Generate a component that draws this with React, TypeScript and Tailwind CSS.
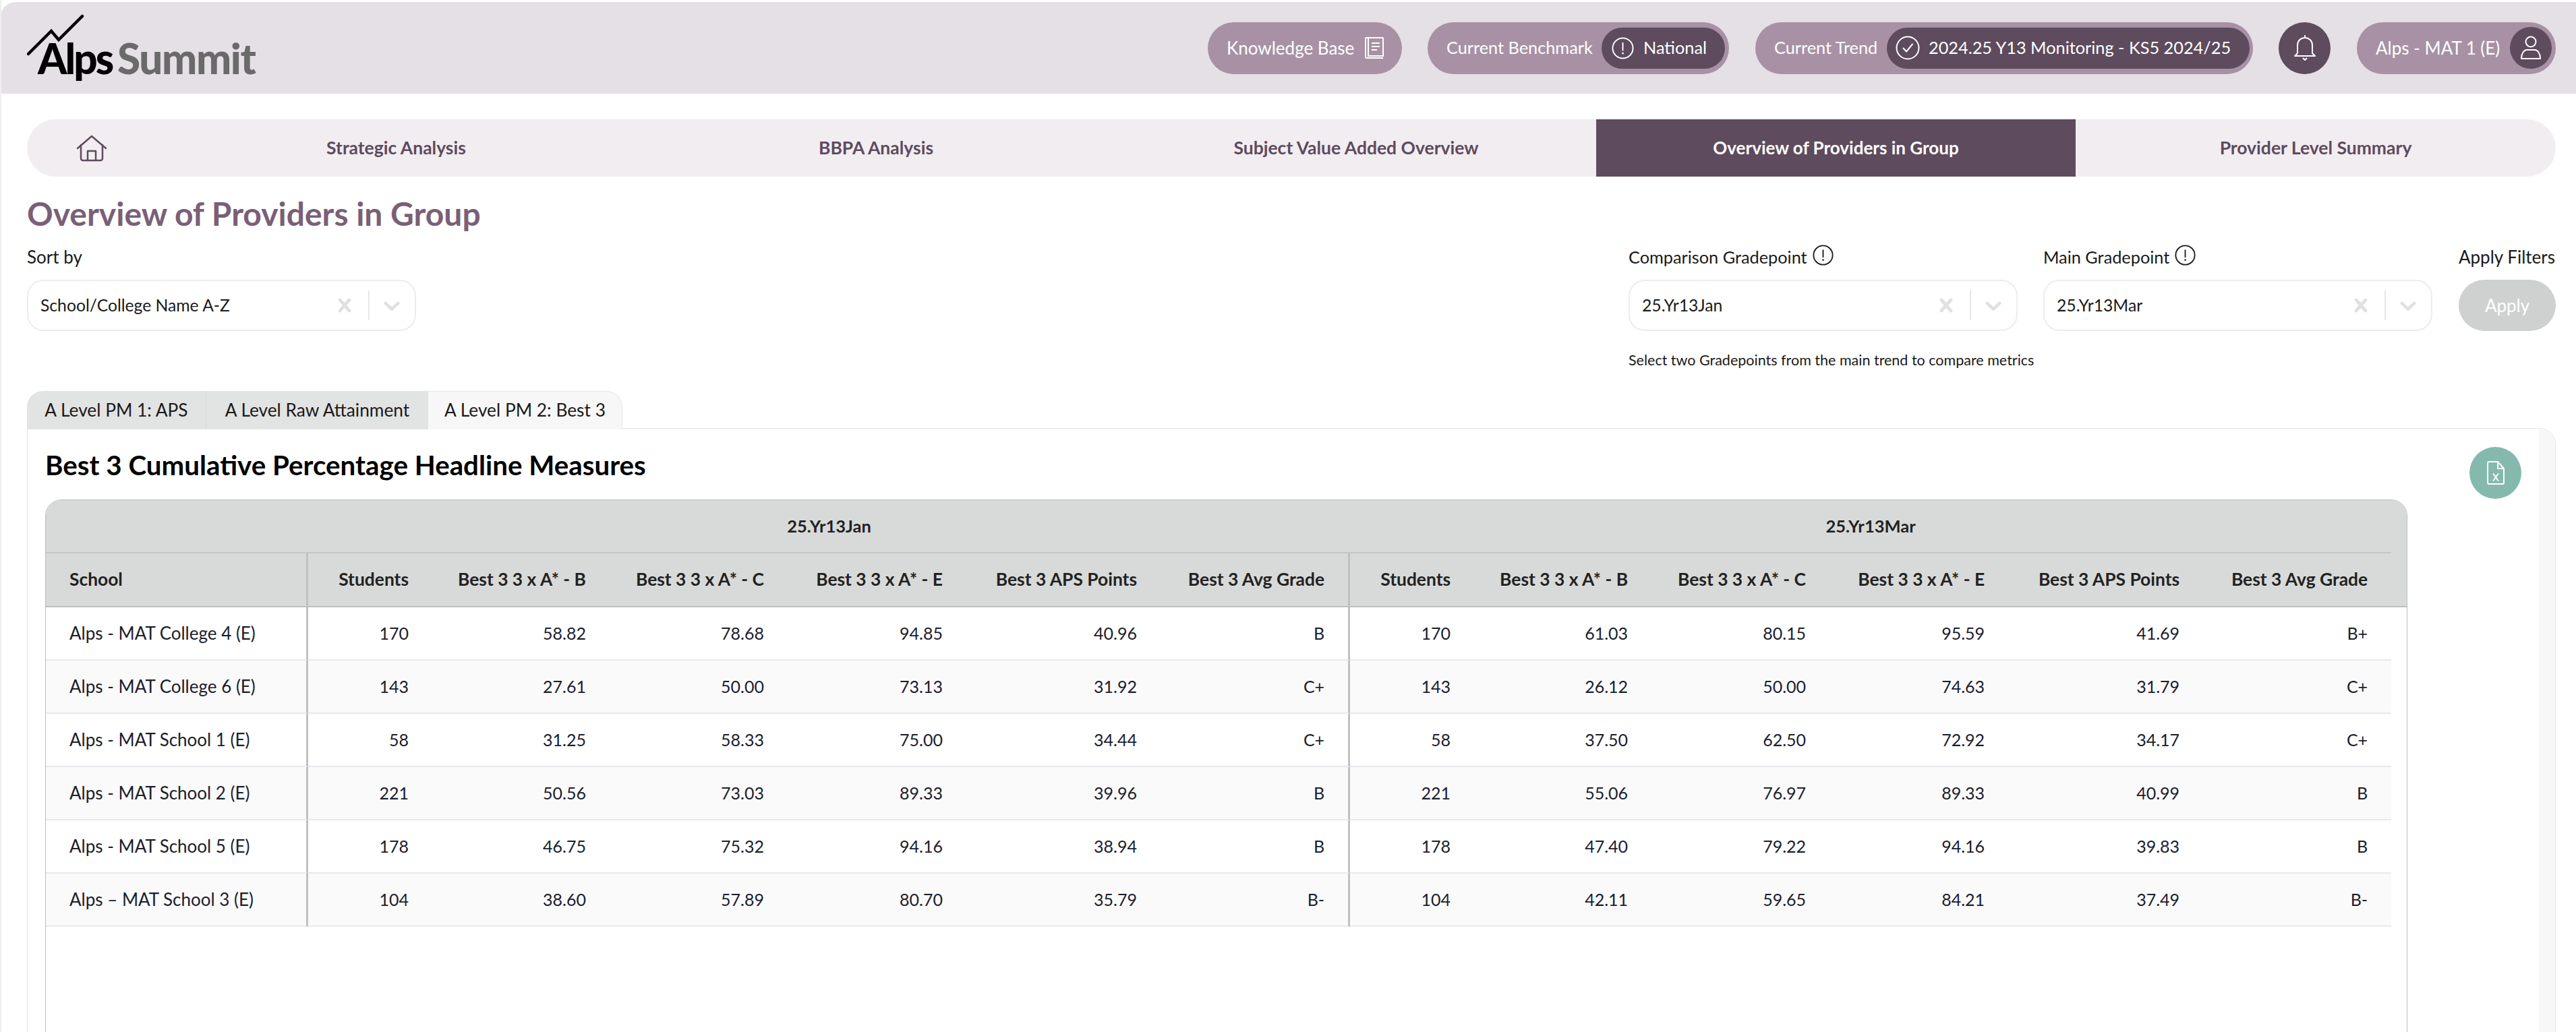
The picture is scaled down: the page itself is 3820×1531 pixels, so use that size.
import React from "react";

const rows: [string, string[], string[]][] = [
  ["Alps - MAT College 4 (E)", ["170", "58.82", "78.68", "94.85", "40.96", "B"], ["170", "61.03", "80.15", "95.59", "41.69", "B+"]],
  ["Alps - MAT College 6 (E)", ["143", "27.61", "50.00", "73.13", "31.92", "C+"], ["143", "26.12", "50.00", "74.63", "31.79", "C+"]],
  ["Alps - MAT School 1 (E)", ["58", "31.25", "58.33", "75.00", "34.44", "C+"], ["58", "37.50", "62.50", "72.92", "34.17", "C+"]],
  ["Alps - MAT School 2 (E)", ["221", "50.56", "73.03", "89.33", "39.96", "B"], ["221", "55.06", "76.97", "89.33", "40.99", "B"]],
  ["Alps - MAT School 5 (E)", ["178", "46.75", "75.32", "94.16", "38.94", "B"], ["178", "47.40", "79.22", "94.16", "39.83", "B"]],
  ["Alps – MAT School 3 (E)", ["104", "38.60", "57.89", "80.70", "35.79", "B-"], ["104", "42.11", "59.65", "84.21", "37.49", "B-"]],
];
const heads = ["Students", "Best 3 3 x A* - B", "Best 3 3 x A* - C", "Best 3 3 x A* - E", "Best 3 APS Points", "Best 3 Avg Grade"];
const widths = [184, 263, 264, 265, 288, 281, 184, 263, 264, 265, 289, 279];

function InfoCircle({ className }: { className: string }) {
  return (
    <svg viewBox="0 0 34 34" fill="none" stroke="currentColor" strokeWidth="2" strokeLinecap="round" className={className}>
      <circle cx="17" cy="17" r="15.5" />
      <path d="M17 9v11" />
      <path d="M17 24.5v.5" strokeWidth="2.6" />
    </svg>
  );
}

function SelectBox({ value, width }: { value: string; width: string }) {
  return (
    <div className={`${width} h-[76px] rounded-[24px] border-2 border-[#ededed] bg-white flex items-center pl-[18px] pr-[14px]`}>
      <span className="flex-1 text-[24.700px] text-[#1a1a1a] leading-none">{value}</span>
      <svg viewBox="0 0 20 20" className="w-[40px] h-[40px] fill-[#e0e0e0]">
        <path d="M14.348 14.849c-0.469 0.469-1.229 0.469-1.697 0l-2.651-3.030-2.651 3.029c-0.469 0.469-1.229 0.469-1.697 0-0.469-0.469-0.469-1.229 0-1.697l2.758-3.15-2.759-3.152c-0.469-0.469-0.469-1.228 0-1.697s1.228-0.469 1.697 0l2.652 3.031 2.651-3.031c0.469-0.469 1.228-0.469 1.697 0s0.469 1.229 0 1.697l-2.758 3.152 2.758 3.15c0.469 0.469 0.469 1.229 0 1.698z" />
      </svg>
      <span className="w-[2px] h-[44px] bg-[#e6e6e6] ml-[15px] mr-[13px]" />
      <svg viewBox="0 0 20 20" className="w-[40px] h-[40px] fill-[#e0e0e0]">
        <path d="M4.516 7.548c0.436-0.446 1.043-0.481 1.576 0l3.908 3.747 3.908-3.747c0.533-0.481 1.141-0.446 1.576 0 0.436 0.445 0.408 1.197 0 1.615-0.406 0.418-4.695 4.502-4.695 4.502-0.217 0.223-0.502 0.335-0.789 0.335s-0.572-0.112-0.789-0.335c0 0-4.287-4.084-4.695-4.502s-0.436-1.17 0-1.615z" />
      </svg>
    </div>
  );
}

function Label({ text, info, size }: { text: string; info?: boolean; size: string }) {
  return (
    <div className={`h-[71px] flex items-start gap-[8px] pt-[19px] leading-[36px] text-[#1a1a1a] ${size}`}>
      <span>{text}</span>
      {info && <InfoCircle className="w-[31px] h-[31px] text-[#1a1a1a]" />}
    </div>
  );
}

export default function App() {
  return (
    <div className="w-[3820px] h-[1531px] overflow-hidden bg-white pt-[3px] border-l-2 border-[#eeeeee] font-[Lato,sans-serif]">
      <header className="h-[136px] -ml-[2px] bg-[#e5dfe6] rounded-tl-[24px] flex items-center pl-[40px] pr-[30px]">
        <div className="relative w-[350px] h-[136px] flex items-start pt-[49px] pl-[16px] gap-[8px] text-[62px] leading-[68px] font-black">
          <svg viewBox="0 0 90 64" fill="none" className="absolute left-0 top-[17px] w-[90px] h-[64px]">
            <path d="M2 60 L36 26 L47 39 L82 4" stroke="#000" strokeWidth="4.5" strokeLinecap="round" strokeLinejoin="miter" />
          </svg>
          <span className="text-black tracking-[-3px]">Alps</span>
          <span className="text-[#6a6a6a] tracking-[-1.400px]">Summit</span>
        </div>
        <div className="ml-auto flex items-center text-white text-[25.300px]">
          <div className="w-[288px] h-[77px] rounded-full bg-[#a891a5] flex items-center justify-between pl-[28px] pr-[26px]">
            <span className="text-[26px]">Knowledge Base</span>
            <svg viewBox="0 0 30 34" fill="none" stroke="currentColor" strokeWidth="2" className="w-[30px] h-[34px]">
              <path d="M6 2h21a1 1 0 0 1 1 1v26H6z" />
              <path d="M6 2H3a1 1 0 0 0-1 1v27a2 2 0 0 0 2 2h24" />
              <path d="M11 10h12M11 15h12M11 20h8" />
            </svg>
          </div>
          <div className="ml-[38px] w-[447px] h-[77px] rounded-full bg-[#a891a5] flex items-center justify-between pl-[28px] pr-[6px]">
            <span>Current Benchmark</span>
            <div className="w-[183px] h-[61px] rounded-full bg-[#5e4b5d] flex items-center pl-[15px] gap-[14px]">
              <InfoCircle className="w-[33px] h-[33px]" />
              <span>National</span>
            </div>
          </div>
          <div className="ml-[39px] w-[738px] h-[77px] rounded-full bg-[#a891a5] flex items-center justify-between pl-[28px] pr-[5px]">
            <span>Current Trend</span>
            <div className="w-[538px] h-[61px] rounded-full bg-[#5e4b5d] flex items-center pl-[13px] gap-[13px]">
              <svg viewBox="0 0 36 36" fill="none" stroke="currentColor" strokeWidth="2" strokeLinecap="round" strokeLinejoin="round" className="w-[36px] h-[36px]">
                <circle cx="18" cy="18" r="16.5" />
                <path d="M11.5 18.5l4.5 5 9-11" />
              </svg>
              <span>2024.25 Y13 Monitoring - KS5 2024/25</span>
            </div>
          </div>
          <div className="ml-[38px] w-[77px] h-[77px] rounded-full bg-[#5e4b5d] flex items-center justify-center">
            <svg viewBox="0 0 32 38" fill="none" stroke="currentColor" strokeWidth="2" strokeLinecap="round" strokeLinejoin="round" className="w-[32px] h-[38px]">
              <path d="M16 1v3M5 27V15C5 8.5 10 4 16 4s11 4.500 11 11v12l4 4H1z" />
              <path d="M13.500 34.500l2.500 2.500 2.500-2.500" />
            </svg>
          </div>
          <div className="ml-[39px] w-[295px] h-[77px] rounded-full bg-[#a891a5] flex items-center justify-between pl-[28px] pr-[6px]">
            <span className="text-[26px]">Alps - MAT 1 (E)</span>
            <div className="w-[62px] h-[62px] rounded-full bg-[#5e4b5d] flex items-center justify-center">
              <svg viewBox="0 0 32 36" fill="none" stroke="currentColor" strokeWidth="2" strokeLinejoin="round" className="w-[32px] h-[36px]">
                <circle cx="16" cy="9" r="7.500" />
                <path d="M2 34c0-8 4-13 8-13h12c4 0 8 5 8 13z" />
              </svg>
            </div>
          </div>
        </div>
      </header>

      <nav className="mt-[38px] mx-[38px] w-[3750px] h-[85px] rounded-full bg-[#f2edf1] overflow-hidden flex items-center text-[26.500px] font-bold text-[#5e4b5d]">
        <div className="w-[192px] h-full flex items-center justify-center">
          <svg viewBox="0 0 46 40" fill="none" stroke="#5e4b5d" strokeWidth="2.500" strokeLinecap="round" strokeLinejoin="round" className="w-[46px] h-[40px]">
            <path d="M2 20L23 2l21 18" />
            <path d="M7 15v20a3 3 0 0 0 3 3h26a3 3 0 0 0 3-3V15" />
            <path d="M17 38V24h12v14" />
          </svg>
        </div>
        <div className="w-[711px] text-center">Strategic Analysis</div>
        <div className="w-[712px] text-center">BBPA Analysis</div>
        <div className="w-[712px] text-center">Subject Value Added Overview</div>
        <div className="w-[711px] h-full bg-[#5e4b5d] text-white text-[26px] flex items-center justify-center">Overview of Providers in Group</div>
        <div className="w-[712px] text-center">Provider Level Summary</div>
      </nav>

      <div className="ml-[38px] w-[3750px]">
        <h1 className="h-[82px] flex items-center pt-[28px] text-[48px] leading-none font-bold text-[#7a5f78]">Overview of Providers in Group</h1>
        <div className="flex h-[236px] items-start">
          <div className="w-[2375px]">
            <Label text="Sort by" size="text-[26px]" />
            <SelectBox value="School/College Name A-Z" width="w-[577px]" />
          </div>
          <div>
            <div className="flex gap-[38px]">
              <div>
                <Label text="Comparison Gradepoint" info size="text-[25.300px]" />
                <SelectBox value="25.Yr13Jan" width="w-[577px]" />
              </div>
              <div>
                <Label text="Main Gradepoint" info size="text-[25.300px]" />
                <SelectBox value="25.Yr13Mar" width="w-[577px]" />
              </div>
            </div>
            <p className="mt-[29px] text-[21.500px] leading-[28px] text-[#1a1a1a]">Select two Gradepoints from the main trend to compare metrics</p>
          </div>
          <div className="ml-[39px] w-[144px]">
            <Label text="Apply Filters" size="text-[26px]" />
            <div className="h-[76px] rounded-full bg-[#cfd1d1] text-white text-[26px] flex items-center justify-center">Apply</div>
          </div>
        </div>

        <div className="flex h-[57px] text-[26.300px] text-[#1a1a1a]">
          <div className="w-[265px] bg-[#e2e3e3] rounded-tl-[24px] flex items-center justify-center">A Level PM 1: APS</div>
          <div className="w-[330px] bg-[#e2e3e3] border-l border-[#d9dada] flex items-center justify-center">A Level Raw Attainment</div>
          <div className="w-[288px] bg-[#f7f7f7] rounded-tr-[24px] border-t border-r border-[#e6e6e6] flex items-center justify-center">A Level PM 2: Best 3</div>
        </div>

        <div className="-mt-[2px] w-[3750px] h-[900px] border border-[#e6e6e6] rounded-tr-[24px] flex overflow-hidden">
          <div className="flex-1 pl-[26px] pr-[26px]">
            <div className="h-[105px] flex items-start justify-between">
              <h2 className="mt-[29px] text-[40.300px] leading-[50px] font-bold text-black">Best 3 Cumulative Percentage Headline Measures</h2>
              <button className="mt-[27px] w-[77px] h-[77px] rounded-full bg-[#85b9ae] flex items-center justify-center text-white">
                <svg viewBox="0 0 26 35" fill="none" stroke="currentColor" strokeWidth="2" strokeLinejoin="round" strokeLinecap="round" className="w-[26px] h-[35px]">
                  <path d="M3 1h13l9 10v21a2 2 0 0 1-2 2H3a2 2 0 0 1-2-2V3a2 2 0 0 1 2-2z" />
                  <path d="M16 1v10h9" />
                  <path d="M9.500 19l7 10M16.500 19l-7 10" />
                </svg>
              </button>
            </div>
            <div className="w-[3503px] h-[800px] border border-[#bdbdbd] rounded-t-[24px] overflow-hidden bg-white">
              <table className="w-full table-fixed border-separate border-spacing-0 text-[25px] text-[#1a202c]">
                <colgroup>
                  <col className="w-[389px]" />
                  {widths.map((w, i) => (
                    <col key={i} style={{ width: w }} />
                  ))}
                  <col />
                </colgroup>
                <thead className="bg-[#d8dad9] text-[#222] text-[26.400px]">
                  <tr className="h-[79px]">
                    <th className="border-b-2 border-[#c4c6c5]" />
                    <th colSpan={6} className="border-b-2 border-[#c4c6c5] font-bold text-center text-[25.500px]">25.Yr13Jan</th>
                    <th colSpan={6} className="border-b-2 border-[#c4c6c5] font-bold text-center text-[25.500px]">25.Yr13Mar</th>
                    <th />
                  </tr>
                  <tr className="h-[80px]">
                    <th className="border-b-2 border-r-[3px] border-[#c0c0c0] pl-[35px] text-left font-bold">School</th>
                    {heads.map((h, i) => (
                      <th key={i} className={`border-b-2 border-[#c0c0c0] pr-[35px] text-right font-bold ${i === 5 ? "border-r-[3px]" : ""}`}>{h}</th>
                    ))}
                    {heads.map((h, i) => (
                      <th key={i} className="border-b-2 border-[#c0c0c0] pr-[35px] text-right font-bold">{h}</th>
                    ))}
                    <th className="border-b-2 border-[#c0c0c0]" />
                  </tr>
                </thead>
                <tbody>
                  {rows.map((r, ri) => (
                    <tr key={ri} className={`h-[79px] ${ri % 2 === 1 ? "bg-[#fafafb]" : "bg-white"}`}>
                      <td className="border-b-2 border-b-[#e8e8ee] border-r-[3px] border-r-[#c0c0c0] pl-[35px] text-[26px]">{r[0]}</td>
                      {r[1].map((v, i) => (
                        <td key={i} className={`border-b-2 border-b-[#e8e8ee] pr-[35px] text-right ${i === 5 ? "border-r-[3px] border-r-[#c0c0c0]" : ""}`}>{v}</td>
                      ))}
                      {r[2].map((v, i) => (
                        <td key={i} className="border-b-2 border-b-[#e8e8ee] pr-[35px] text-right">{v}</td>
                      ))}
                      <td className="bg-white" />
                    </tr>
                  ))}
                </tbody>
              </table>
            </div>
          </div>
          <div className="w-[24px] bg-[#f7f7f7]" />
        </div>
      </div>
    </div>
  );
}
